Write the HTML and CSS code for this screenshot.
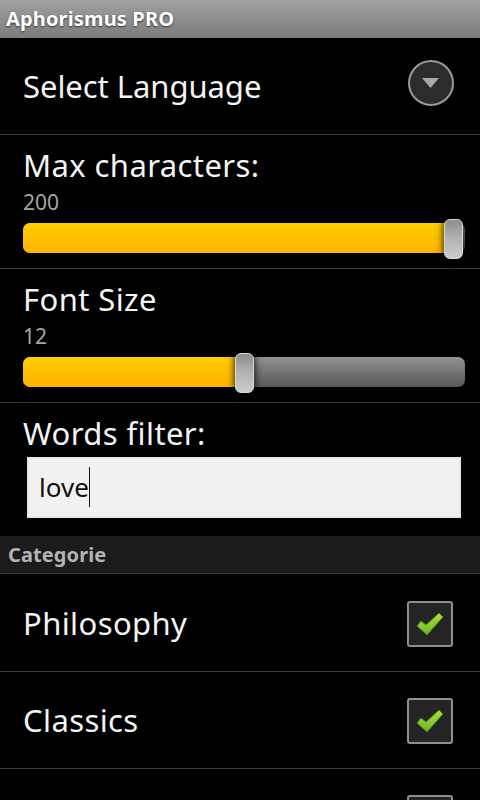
FILE: index.html
```html
<!DOCTYPE html>
<html lang="en">
<head>
    <meta charset="UTF-8">
    <title>Aphorismus PRO</title>
    <link rel="stylesheet" href="styles.css">
</head>
<body>
    <div class="title-bar">Aphorismus PRO</div>
    <div class="row row-pick">
        <span class="label label-tight">Select Language</span>
        <svg class="pick-icon" width="46" height="46" viewBox="0 0 46 46">
            <circle cx="23" cy="23" r="22" fill="#2c2c2c" stroke="#9a9a9a" stroke-width="2"/>
            <path d="M14 18h17l-8.500 10z" fill="#a8a8a8"/>
        </svg>
    </div>
    <div class="row row-slider">
        <div class="label">Max characters:</div>
        <div class="value">200</div>
        <div class="slider">
            <div class="slider-fill" style="width: 97%"></div>
            <div class="slider-thumb" style="left: 421px"></div>
        </div>
    </div>
    <div class="row row-slider">
        <div class="label">Font Size</div>
        <div class="value">12</div>
        <div class="slider">
            <div class="slider-fill" style="width: 50%"></div>
            <div class="slider-thumb" style="left: 212px"></div>
        </div>
    </div>
    <div class="row-filter">
        <div class="label">Words filter:</div>
        <div class="text-box"><span class="typed">love</span></div>
    </div>
    <div class="section-head">Categorie</div>
    <div class="row row-check">
        <span class="label">Philosophy</span>
        <span class="check">
            <svg width="30" height="26" viewBox="0 0 30 26">
                <defs>
                    <linearGradient id="tick" x1="0" y1="0" x2="0" y2="1">
                        <stop offset="0" stop-color="#a6e63c"/>
                        <stop offset="1" stop-color="#6fb322"/>
                    </linearGradient>
                </defs>
                <path d="M2 15l4-5 5 4L24 2l4 4-16 18z" fill="url(#tick)" stroke="#4f7a18" stroke-width="1"/>
            </svg>
        </span>
    </div>
    <div class="row row-check">
        <span class="label">Classics</span>
        <span class="check">
            <svg width="30" height="26" viewBox="0 0 30 26">
                <path d="M2 15l4-5 5 4L24 2l4 4-16 18z" fill="url(#tick)" stroke="#4f7a18" stroke-width="1"/>
            </svg>
        </span>
    </div>
    <div class="row row-check">
        <span class="label"></span>
        <span class="check"></span>
    </div>
</body>
</html>
```

FILE: styles.css
```css
html, body {
    height: 800px;
    overflow: hidden;
}
body {
    margin: 0;
    background-color: #000000;
    color: #ffffff;
    font-family: "Noto Sans", "Open Sans", sans-serif;
}
.title-bar {
    height: 38px;
    line-height: 37px;
    padding-left: 6px;
    font-size: 20px;
    font-weight: 700;
    letter-spacing: 0.15px;
    background: linear-gradient(#a0a0a0, #7c7c7c);
    text-shadow: 0 1px 2px #333333;
}
.row {
    border-bottom: 1px solid #3a3a3a;
    padding: 0 27px 0 23px;
}
.label {
    font-size: 31px;
    line-height: 42px;
    letter-spacing: 0.4px;
    color: #f4f4f4;
}
.label-tight {
    letter-spacing: -0.05px;
}
.value {
    font-size: 21px;
    line-height: 28px;
    margin-top: 2px;
    color: #a6a6a6;
}
.row-pick {
    height: 96px;
    padding-right: 26px;
    display: flex;
    align-items: center;
    justify-content: space-between;
}
.pick-icon {
    margin-bottom: 7px;
}
.row-slider {
    height: 134px;
    padding: 9px 15px 0 23px;
    box-sizing: border-box;
}
.slider {
    position: relative;
    height: 30px;
    margin-top: 7px;
    border-radius: 7px;
    background: linear-gradient(#929292, #747474 50%, #585858);
}
.slider-fill {
    height: 100%;
    border-radius: 7px 0 0 7px;
    background: linear-gradient(#ffcc00, #ffb400);
}
.slider-thumb {
    position: absolute;
    top: -4px;
    width: 19px;
    height: 40px;
    border-radius: 6px;
    background: linear-gradient(#8e8e8e, #b4b4b4 50%, #cacad0);
    border: 1px solid #d8d8d8;
    box-sizing: border-box;
    box-shadow: 0 0 7px 1px rgba(0, 0, 0, 0.8);
}
.row-filter {
    height: 133px;
    padding: 9px 19px 0 23px;
    box-sizing: border-box;
}
.text-box {
    height: 61px;
    margin: 3px 0 0 4px;
    padding-left: 10px;
    box-sizing: border-box;
    background-color: #f1f1f1;
    border: 2px solid #e6e6e6;
    color: #111111;
    font-size: 26px;
    line-height: 57px;
}
.typed {
    border-right: 1px solid #111111;
    padding: 2px 0;
}
.section-head {
    height: 37px;
    line-height: 38px;
    padding-left: 8px;
    font-size: 20px;
    font-weight: 700;
    letter-spacing: 0.1px;
    color: #b4b4b4;
    background-color: #1b1b1b;
    border-bottom: 1px solid #3a3a3a;
    margin-bottom: 1px;
}
.row-check {
    height: 94px;
    padding-top: 2px;
    display: flex;
    align-items: center;
    justify-content: space-between;
}
.row-check .label {
    margin-bottom: 2px;
}
.check {
    width: 46px;
    height: 46px;
    box-sizing: border-box;
    border: 2px solid #8f8f8f;
    border-radius: 3px;
    background-color: #242424;
    display: flex;
    align-items: center;
    justify-content: center;
}
```
